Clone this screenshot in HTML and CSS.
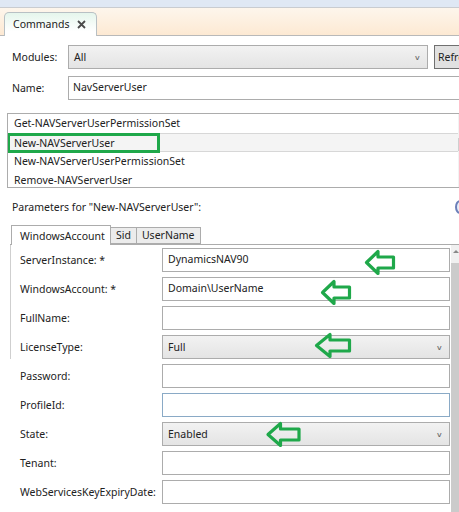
FILE: index.html
```html
<!DOCTYPE html>
<html>
<head>
<meta charset="utf-8">
<link rel="stylesheet" href="styles.css">
</head>
<body>
<div class="app">
  <div class="topstrip"></div>
  <div class="tabbar">
    <div class="doc-tab">
      <span>Commands</span>
      <svg class="close" width="9" height="9" viewBox="0 0 9 9"><path d="M1 1L8 8M8 1L1 8" stroke="#4a4a4a" stroke-width="1.8" fill="none"/></svg>
    </div>
  </div>
  <div class="content">
    <div class="row-top">
      <label class="lbl">Modules:</label>
      <div class="select modules"><span>All</span><span class="chev">&#x2228;</span></div>
      <div class="refresh">Refresh</div>
    </div>
    <div class="row-top">
      <label class="lbl">Name:</label>
      <div class="input name">NavServerUser</div>
    </div>
    <div class="list">
      <div class="items">
        <div class="item">Get-NAVServerUserPermissionSet</div>
        <div class="item sel">New-NAVServerUser</div>
        <div class="item">New-NAVServerUserPermissionSet</div>
        <div class="item">Remove-NAVServerUser</div>
      </div>
      <div class="list-scroll"><div class="list-thumb"></div></div>
      <div class="hl-box"></div>
    </div>
    <div class="params-row">
      <span>Parameters for "New-NAVServerUser":</span>
      <span class="info"></span>
    </div>
    <div class="ptabs">
      <div class="ptab active">WindowsAccount</div>
      <div class="ptab">Sid</div>
      <div class="ptab">UserName</div>
    </div>
    <div class="panel">
      <div class="form">
        <div class="frow"><span class="flbl">ServerInstance: *</span><div class="input f">DynamicsNAV90</div></div>
        <div class="frow"><span class="flbl">WindowsAccount: *</span><div class="input f">Domain\UserName</div></div>
        <div class="frow"><span class="flbl">FullName:</span><div class="input f"></div></div>
        <div class="frow"><span class="flbl">LicenseType:</span><div class="select f"><span>Full</span><span class="chev">&#x2228;</span></div></div>
        <div class="frow"><span class="flbl">Password:</span><div class="input f"></div></div>
        <div class="frow"><span class="flbl">ProfileId:</span><div class="input f focus"></div></div>
        <div class="frow"><span class="flbl">State:</span><div class="select f"><span>Enabled</span><span class="chev">&#x2228;</span></div></div>
        <div class="frow"><span class="flbl">Tenant:</span><div class="input f"></div></div>
        <div class="frow"><span class="flbl">WebServicesKeyExpiryDate:</span><div class="input f"></div></div>
      </div>
      <div class="vscroll">
        <div class="vs-arrow"></div>
        <div class="vs-thumb"></div>
      </div>
      <div class="panel-left"></div>
    </div>
  </div>
  <svg class="arrow a1" width="32" height="27" viewBox="0 0 32 27"><path d="M2.5 13.5L14 2.5V8H29.5V19H14V24.5Z" fill="none" stroke="#1fa84a" stroke-width="3.2" stroke-linejoin="round"/></svg>
  <svg class="arrow a2" width="34" height="27" viewBox="0 0 32 27"><path d="M2.5 13.5L14 2.5V8H29.5V19H14V24.5Z" fill="none" stroke="#1fa84a" stroke-width="3.2" stroke-linejoin="round"/></svg>
  <svg class="arrow a3" width="40" height="27" viewBox="0 0 38 27"><path d="M2.5 13.5L16 2.5V8H35.5V19H16V24.5Z" fill="none" stroke="#1fa84a" stroke-width="3.2" stroke-linejoin="round"/></svg>
  <svg class="arrow a4" width="37" height="27" viewBox="0 0 36 27"><path d="M2.5 13.5L15 2.5V8H33.5V19H15V24.5Z" fill="none" stroke="#1fa84a" stroke-width="3.2" stroke-linejoin="round"/></svg>
</div>
</body>
</html>
```
FILE: styles.css
```css
* { box-sizing: border-box; }
html, body { margin: 0; padding: 0; background: #fff; }
body {
  font-family: "Noto Sans", "Open Sans", sans-serif;
  font-size: 10.5px;
  color: #222;
  width: 459px;
  height: 512px;
  overflow: hidden;
}
.app { position: relative; width: 459px; height: 512px; overflow: hidden; }
.topstrip {
  height: 8px;
  background: #dfe8f4;
  border-bottom: 1px solid #c9ccd0;
}
.tabbar {
  height: 28px;
  background: linear-gradient(#fdf6ec, #fde9d3);
  border-bottom: 1px solid #b9b9b9;
  padding: 5px 0 0 4px;
  display: flex;
  align-items: flex-end;
}
.doc-tab {
  width: 93px;
  height: 24px;
  margin-bottom: -1px;
  border: 1px solid #b8c0c4;
  border-bottom: none;
  border-radius: 5px 5px 0 0;
  background: linear-gradient(#e5f6ec, #ffffff 80%);
  display: flex;
  align-items: center;
  padding: 0 0 1px 8px;
  font-size: 10.5px;
  color: #222;
}
.doc-tab .close { margin-left: 7px; }
.content { padding: 9px 0 0 0; }
.row-top {
  display: flex;
  align-items: center;
  height: 24px;
  margin-bottom: 7px;
}
.lbl { width: 68px; flex: none; padding-left: 12px; }
.select {
  height: 24px;
  border: 1px solid #acacac;
  background: linear-gradient(#f2f2f2, #e4e4e4);
  display: flex;
  align-items: center;
  justify-content: space-between;
  padding: 0 7px 0 5px;
}
.chev { font-size: 7px; color: #666; transform: scaleX(1.3); }
.modules { width: 360px; flex: none; }
.refresh {
  margin-left: 6px;
  height: 24px;
  width: 60px;
  flex: none;
  border: 1px solid #707070;
  background: #e1e1e1;
  padding: 4px 0 0 3px;
}
.input {
  height: 24px;
  border: 1px solid #acacac;
  background: #fff;
  padding: 3px 0 0 5px;
}
.name { width: 400px; flex: none; padding-left: 4px; }
.list {
  position: relative;
  margin: 13px 0 0 7px;
  width: 470px;
  height: 75px;
  border: 1px solid #acacac;
  overflow: hidden;
  display: flex;
}
.items { width: 450px; flex: none; }
.item { height: 19px; line-height: 18px; padding-left: 6px; }
.item.sel { background: #f4f4f4; border-top: 1px solid #d7d7d7; border-bottom: 1px solid #d7d7d7; }
.list-scroll { width: 20px; flex: none; background: #f2f2f2; }
.list-thumb { margin: 24px 0 0 0; width: 6px; height: 13px; background: #cfcfcf; }
.hl-box {
  position: absolute;
  left: -1px;
  top: 19px;
  width: 153px;
  height: 20px;
  border: 3px solid #1fa84a;
}
.params-row {
  display: flex;
  justify-content: space-between;
  align-items: center;
  height: 20px;
  margin-top: 9px;
  padding-left: 12px;
}
.info {
  width: 10px;
  height: 14px;
  margin-right: -6px;
  border-radius: 50%;
  border: 2px solid #6b7fb9;
  background: #e8ecf6;
}
.ptabs {
  display: flex;
  align-items: flex-end;
  margin: 7px 0 0 11px;
  height: 20px;
}
.ptab {
  height: 17px;
  padding: 0 5px;
  border: 1px solid #acacac;
  border-left: none;
  background: #ececec;
  line-height: 15px;
}
.ptab.active {
  height: 20px;
  width: 100px;
  border-left: 1px solid #acacac;
  border-bottom: none;
  background: #fff;
  line-height: 20px;
  padding-left: 8px;
  margin-bottom: -1px;
  position: relative;
  z-index: 1;
}
.panel {
  position: relative;
  border-top: 1px solid #acacac;
  margin-left: 10px;
  display: flex;
  height: 300px;
}
.panel-left {
  position: absolute;
  left: 0;
  top: 0;
  width: 1px;
  height: 114px;
  background: #cfcfcf;
}
.form { width: 441px; flex: none; padding: 3px 0 0 10px; }
.frow {
  display: flex;
  align-items: center;
  height: 24px;
  margin-bottom: 5px;
}
.flbl { width: 142px; flex: none; }
.f { width: 288px; flex: none; }
.select.f { padding-right: 7px; }
.input.f { padding-left: 5px; }
.focus { border-color: #8aaac6; }
.vscroll { width: 8px; flex: none; background: #f0f0f0; position: relative; }
.vs-arrow {
  position: absolute; left: 2px; top: 5px;
  width: 0; height: 0;
  border-left: 3px solid transparent; border-right: 3px solid transparent;
  border-bottom: 3px solid #888;
}
.vs-thumb { margin-top: 18px; width: 8px; height: 300px; background: #cbcbcb; }
.arrow { position: absolute; }
.a1 { left: 364px; top: 249px; }
.a2 { left: 319px; top: 279px; }
.a3 { left: 313px; top: 332px; }
.a4 { left: 265px; top: 421px; }
```
